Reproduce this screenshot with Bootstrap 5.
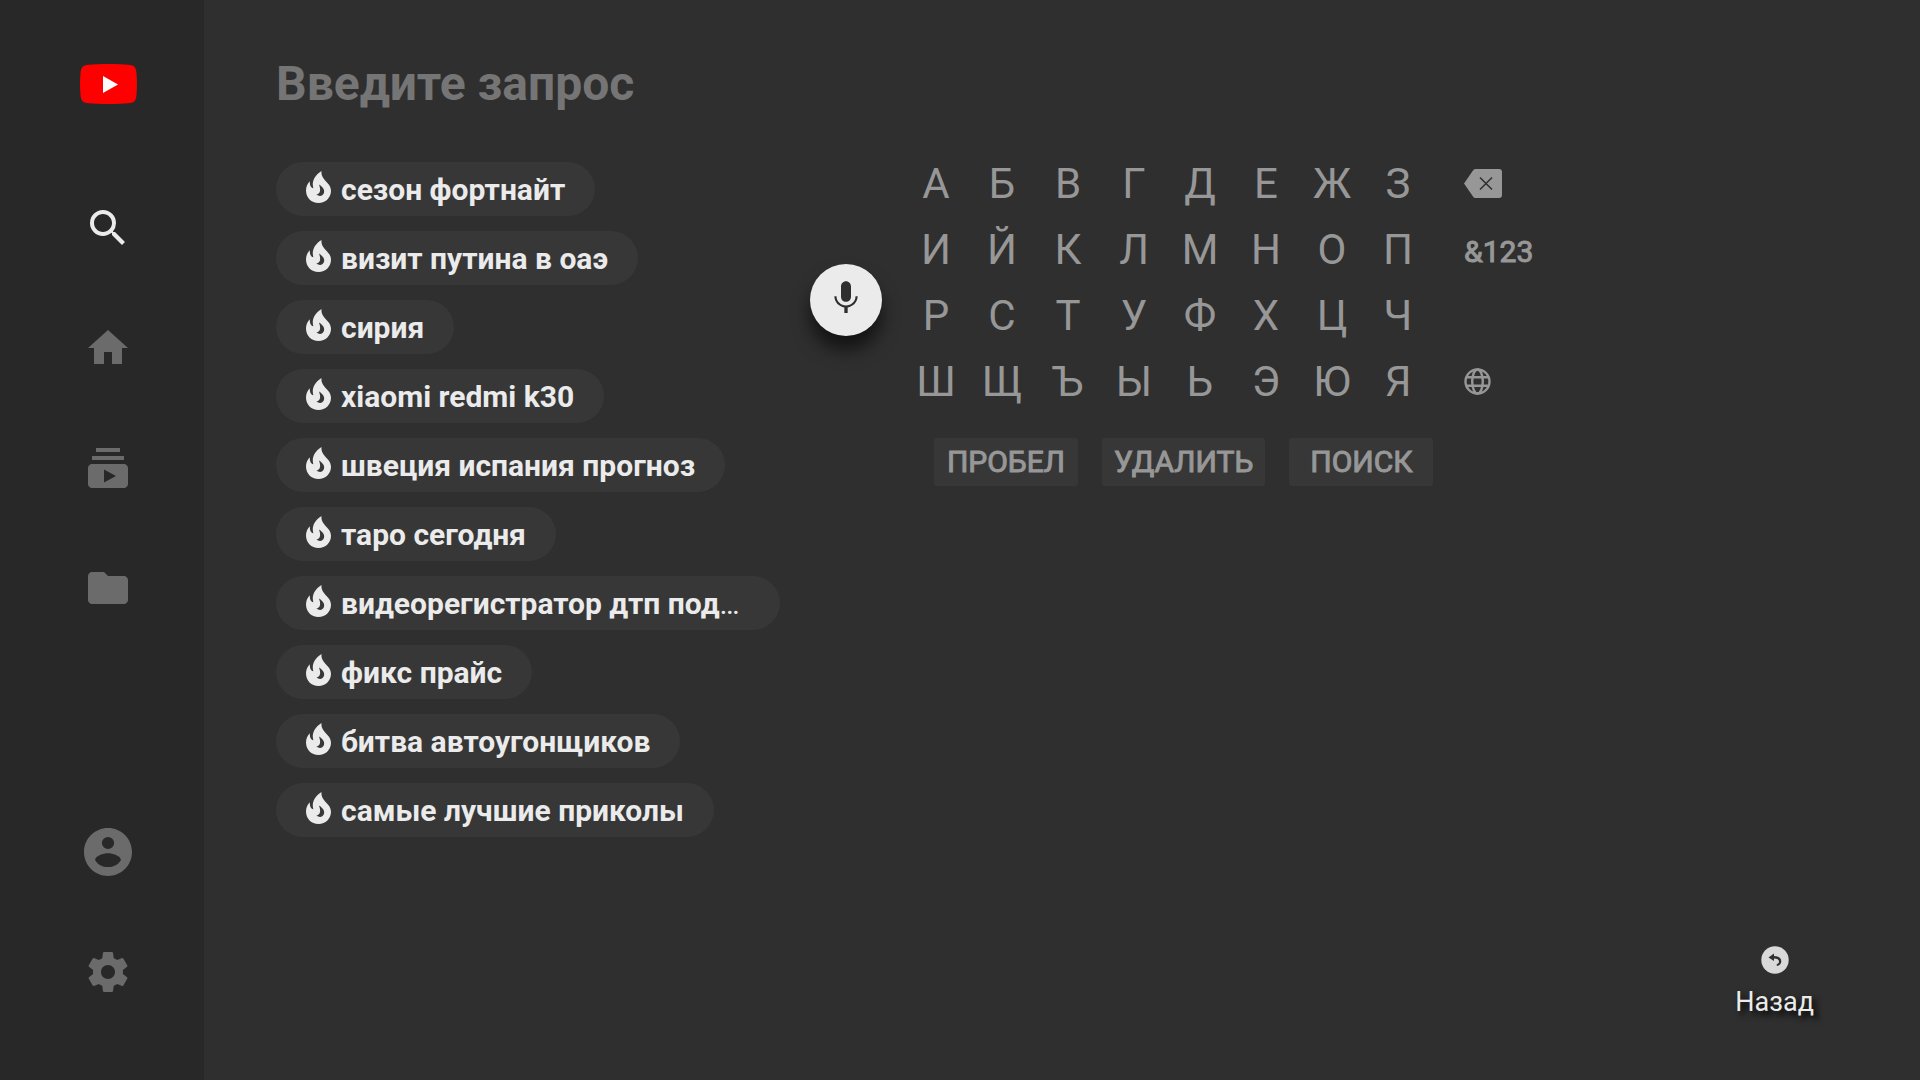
<!DOCTYPE html>
<html lang="ru">
<head>
<meta charset="utf-8">
<meta name="viewport" content="width=device-width, initial-scale=1">
<title>YouTube</title>
<link href="https://cdn.jsdelivr.net/npm/bootstrap@5.3.0/dist/css/bootstrap.min.css" rel="stylesheet">
<style>
body { background: #2f2f2f; color: #ebebeb; font-family: Roboto, "Noto Sans", sans-serif; }
button { font-family: inherit; }
svg { display: block; fill: currentColor; flex: none; }
.side { width: 204px; background: #282828; padding: 64px 0 72px; flex: none; }
.side-logo { margin-bottom: 88px; }
.side-list { gap: 48px; }
.side-logo, .side-list { padding-right: 12px; padding-left: 24px; }
.side-link { width: 72px; height: 72px; color: #6b6b6b; }
.side-link.active { color: #ebebeb; }
.content { padding: 56px 72px 60px; min-width: 0; }
.query { height: 56px; font-size: 48px; line-height: 56px; font-weight: 700; color: #ebebeb; background: transparent; border: 0; outline: 0; padding: 0; }
.query::placeholder { color: #757575; opacity: 1; }
.workspace { margin-top: 38px; }
.hints { width: 504px; gap: 15px; margin-top: 12px; flex: none; }
.hint { height: 54px; padding: 2px 30px 0; border: 0; border-radius: 27px; background: #373737; color: #ebebeb; font-size: 30px; line-height: 52px; font-weight: 700; gap: 10px; white-space: nowrap; }
.hint svg { margin-bottom: 6px; }
.hint-long { width: 100%; }
.mic { width: 72px; height: 72px; margin: 114px 21px 0 30px; padding: 0 0 4px; border: 0; border-radius: 50%; background: #ebebeb; color: #2f2f2f; box-shadow: 0 14px 18px rgba(0,0,0,.6); flex: none; }
.keys { display: grid; grid-template-columns: repeat(8, 66px); }
.key { height: 66px; padding: 2px 0 0; border: 0; background: transparent; color: #979797; font-size: 42px; line-height: 64px; }
.side-keys { margin-left: 33px; }
.side-key { height: 66px; padding: 0; border: 0; background: transparent; color: #979797; }
.side-key-text { padding-top: 4px; }
.side-key-text, .action { font-size: 30px; font-weight: 400; -webkit-text-stroke: 1px currentColor; }
.actions { gap: 24px; margin-top: 24px; padding-left: 31px; }
.action { min-width: 144px; height: 48px; padding: 0 12px; border: 0; border-radius: 3px; background: #373737; color: #979797; line-height: 48px; }
.back { border: 0; padding: 0; background: transparent; color: #ebebeb; font-size: 27px; line-height: 32px; gap: 12px; text-shadow: 4px 4px 6px #000; margin-right: 34px; margin-bottom: 2px; }
</style>
</head>
<body>
<svg class="d-none" aria-hidden="true">
  <symbol id="flame" viewBox="0 0 25 32"><path fill-rule="evenodd" d="M15.500 0C9.500 3.500 6.500 9 6.800 14C6.900 15.500 7.300 16.500 7.300 17.300C4.800 17 3.500 13.500 3.900 10.200C1.200 12.500 0 16 0 19.500C0 26.500 5.300 32 12.500 32S25 26.600 25 19.800C25 11 14.500 9.500 15.500 0ZM13 13.500C17.500 16.500 18.700 19 18 21.800C17.200 25 13.500 26 10.300 23.500C14 23 15.300 19.500 13 13.500Z"/></symbol>
</svg>
<div class="d-flex min-vh-100">
  <nav class="side d-flex flex-column align-items-center" aria-label="Меню">
    <a class="side-logo" href="#" aria-label="YouTube"><svg width="57" height="40" viewBox="0 0 57 40"><path fill="#f00" d="M7 1C20-.3 37-.3 50 1c4 .4 5.700 2.500 6.200 6 1 8 1 18 0 26-.5 3.500-2.200 5.600-6.200 6-13 1.300-30 1.300-43 0-4-.4-5.700-2.500-6.200-6-1-8-1-18 0-26C1.300 3.500 3 1.400 7 1z"/><path fill="#fff" d="M23 12l15 8.500L23 29z"/></svg></a>
    <div class="side-list d-flex flex-column flex-grow-1">
      <a class="side-link active d-flex align-items-center justify-content-center" href="#" aria-label="Поиск"><svg width="48" height="48" viewBox="0 0 24 24"><path d="M15.500 14h-.79l-.28-.27A6.471 6.471 0 0 0 16 9.500 6.500 6.500 0 1 0 9.500 16c1.610 0 3.090-.59 4.230-1.570l.27.28v.79l5 4.990L20.490 19l-4.990-5zm-6 0C7.010 14 5 11.990 5 9.500S7.010 5 9.500 5 14 7.010 14 9.500 11.990 14 9.500 14z"/></svg></a>
      <a class="side-link d-flex align-items-center justify-content-center" href="#" aria-label="Главная"><svg width="48" height="48" viewBox="0 0 24 24"><path d="M10 20v-6h4v6h5v-8h3L12 3 2 12h3v8z"/></svg></a>
      <a class="side-link d-flex align-items-center justify-content-center" href="#" aria-label="Подписки"><svg width="48" height="48" viewBox="0 0 24 24"><path d="M20 8H4V6h16v2zm-2-6H6v2h12V2zm4 10v8c0 1.100-.9 2-2 2H4c-1.100 0-2-.9-2-2v-8c0-1.100.9-2 2-2h16c1.100 0 2 .9 2 2zm-6 4l-6-3.270v6.530L16 16z"/></svg></a>
      <a class="side-link d-flex align-items-center justify-content-center" href="#" aria-label="Библиотека"><svg width="48" height="48" viewBox="0 0 24 24"><path d="M10 4H4c-1.100 0-1.990.9-1.990 2L2 18c0 1.100.9 2 2 2h16c1.100 0 2-.9 2-2V8c0-1.100-.9-2-2-2h-8l-2-2z"/></svg></a>
      <a class="side-link mt-auto d-flex align-items-center justify-content-center" href="#" aria-label="Аккаунт"><svg width="48" height="48" viewBox="2 2 20 20"><path d="M12 2C6.480 2 2 6.480 2 12s4.480 10 10 10 10-4.480 10-10S17.520 2 12 2zm0 3.700a2.550 2.550 0 1 1 0 5.100 2.550 2.550 0 0 1 0-5.100zm0 12.600c-2.400 0-4.400-1.200-5.400-3 .2-1.800 3.500-2.800 5.400-2.800s5.200 1 5.400 2.800c-1 1.800-3 3-5.400 3z"/></svg></a>
      <a class="side-link d-flex align-items-center justify-content-center" href="#" aria-label="Настройки"><svg width="48" height="48" viewBox="0 0 24 24"><path d="M19.430 12.980c.04-.32.07-.64.07-.98s-.03-.66-.07-.98l2.110-1.650c.19-.15.24-.42.12-.64l-2-3.460c-.12-.22-.39-.3-.61-.22l-2.490 1c-.52-.4-1.080-.73-1.690-.98l-.38-2.650C14.460 2.180 14.250 2 14 2h-4c-.25 0-.46.18-.49.42l-.38 2.650c-.61.25-1.170.59-1.690.98l-2.490-1c-.23-.09-.49 0-.61.22l-2 3.460c-.13.22-.07.49.12.64l2.110 1.650c-.04.32-.07.65-.07.98s.03.66.07.98l-2.110 1.650c-.19.15-.24.42-.12.64l2 3.460c.12.22.39.3.61.22l2.490-1c.52.4 1.080.73 1.690.98l.38 2.650c.03.24.24.42.49.42h4c.25 0 .46-.18.49-.42l.38-2.650c.61-.25 1.170-.59 1.690-.98l2.490 1c.23.09.49 0 .61-.22l2-3.460c.12-.22.07-.49-.12-.64l-2.110-1.650zM12 15.500c-1.930 0-3.500-1.570-3.500-3.500s1.570-3.500 3.500-3.500 3.500 1.570 3.500 3.500-1.570 3.500-3.500 3.500z"/></svg></a>
    </div>
  </nav>
  <main class="content d-flex flex-column flex-grow-1">
    <input class="query w-100" type="text" placeholder="Введите запрос" aria-label="Введите запрос">
    <div class="workspace d-flex align-items-start">
      <div class="hints d-flex flex-column align-items-start">
        <button type="button" class="hint d-flex align-items-center"><svg width="25" height="32"><use href="#flame"/></svg>сезон фортнайт</button>
        <button type="button" class="hint d-flex align-items-center"><svg width="25" height="32"><use href="#flame"/></svg>визит путина в оаэ</button>
        <button type="button" class="hint d-flex align-items-center"><svg width="25" height="32"><use href="#flame"/></svg>сирия</button>
        <button type="button" class="hint d-flex align-items-center"><svg width="25" height="32"><use href="#flame"/></svg>xiaomi redmi k30</button>
        <button type="button" class="hint d-flex align-items-center"><svg width="25" height="32"><use href="#flame"/></svg>швеция испания прогноз</button>
        <button type="button" class="hint d-flex align-items-center"><svg width="25" height="32"><use href="#flame"/></svg>таро сегодня</button>
        <button type="button" class="hint hint-long d-flex align-items-center"><svg width="25" height="32"><use href="#flame"/></svg><span>видеорегистратор дтп под<span class="fw-normal">…</span></span></button>
        <button type="button" class="hint d-flex align-items-center"><svg width="25" height="32"><use href="#flame"/></svg>фикс прайс</button>
        <button type="button" class="hint d-flex align-items-center"><svg width="25" height="32"><use href="#flame"/></svg>битва автоугонщиков</button>
        <button type="button" class="hint d-flex align-items-center"><svg width="25" height="32"><use href="#flame"/></svg>самые лучшие приколы</button>
      </div>
      <button type="button" class="mic d-flex align-items-center justify-content-center" aria-label="Голосовой поиск"><svg width="40" height="40" viewBox="0 0 24 24"><path d="M12 14.300c1.700 0 3-1.400 3-3.100V5.100C15 3.400 13.700 2 12 2S9 3.400 9 5.100v6.100c0 1.700 1.300 3.100 3 3.100zm5.700-3.300c0 3.200-2.700 5.500-5.700 5.500S6.300 14.200 6.300 11H5c0 3.400 2.700 6.200 6 6.700V21h2v-3.300c3.300-.5 6-3.300 6-6.700h-1.300z"/></svg></button>
      <div>
        <div class="d-flex">
          <div class="keys">
            <button type="button" class="key">А</button><button type="button" class="key">Б</button><button type="button" class="key">В</button><button type="button" class="key">Г</button><button type="button" class="key">Д</button><button type="button" class="key">Е</button><button type="button" class="key">Ж</button><button type="button" class="key">З</button>
            <button type="button" class="key">И</button><button type="button" class="key">Й</button><button type="button" class="key">К</button><button type="button" class="key">Л</button><button type="button" class="key">М</button><button type="button" class="key">Н</button><button type="button" class="key">О</button><button type="button" class="key">П</button>
            <button type="button" class="key">Р</button><button type="button" class="key">С</button><button type="button" class="key">Т</button><button type="button" class="key">У</button><button type="button" class="key">Ф</button><button type="button" class="key">Х</button><button type="button" class="key">Ц</button><button type="button" class="key">Ч</button>
            <button type="button" class="key">Ш</button><button type="button" class="key">Щ</button><button type="button" class="key">Ъ</button><button type="button" class="key">Ы</button><button type="button" class="key">Ь</button><button type="button" class="key">Э</button><button type="button" class="key">Ю</button><button type="button" class="key">Я</button>
          </div>
          <div class="side-keys d-flex flex-column align-items-start">
            <button type="button" class="side-key" aria-label="Стереть"><svg width="38" height="29" viewBox="0 0 38 29"><path d="M12 0h23a3 3 0 0 1 3 3v23a3 3 0 0 1-3 3H12c-1.500 0-2.300-.5-3-1.500L0 14.500 9 1.500C9.700.5 10.500 0 12 0z"/><path d="M16 8.500l12 12m0-12l-12 12" fill="none" stroke="#2f2f2f" stroke-width="1.500"/></svg></button>
            <button type="button" class="side-key side-key-text">&amp;123</button>
            <div class="side-key"></div>
            <button type="button" class="side-key" aria-label="Язык"><svg width="27" height="27" viewBox="0 0 27 27"><g fill="none" stroke="currentColor" stroke-width="2.400"><circle cx="13.500" cy="13.500" r="12"/><ellipse cx="13.500" cy="13.500" rx="5.300" ry="12"/><path d="M2.500 9.200h22M2.500 17.800h22"/></g></svg></button>
          </div>
        </div>
        <div class="actions d-flex">
          <button type="button" class="action">ПРОБЕЛ</button>
          <button type="button" class="action">УДАЛИТЬ</button>
          <button type="button" class="action">ПОИСК</button>
        </div>
      </div>
    </div>
    <button type="button" class="back mt-auto align-self-end d-flex flex-column align-items-center"><svg width="28" height="28" viewBox="0 0 28 28"><circle cx="14" cy="14" r="13.700" fill="#d9d9d9"/><path fill="#2f2f2f" d="M7.500 11.500L13 7.500v2.500c4.500 0 7.300 2 7.300 5.300 0 2.500-1.700 4.400-4.500 4.700v-2c1.500-.3 2.200-1.300 2.200-2.600 0-1.800-1.800-2.900-5-2.900v2.600z"/></svg>Назад</button>
  </main>
</div>
<script src="https://cdn.jsdelivr.net/npm/bootstrap@5.3.0/dist/js/bootstrap.bundle.min.js"></script>
</body>
</html>
